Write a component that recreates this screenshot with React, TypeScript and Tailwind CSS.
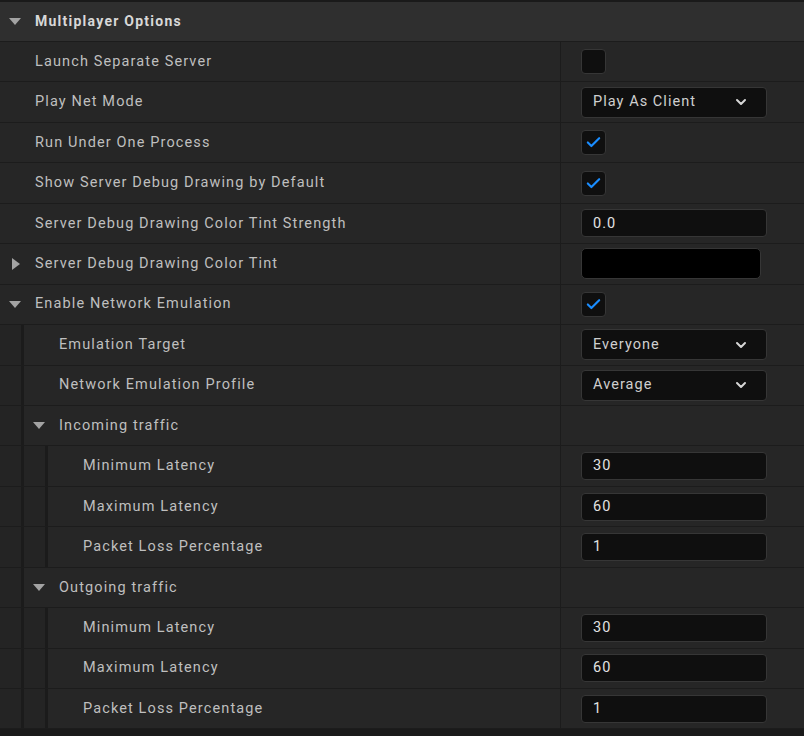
import { Check, ChevronDown } from "lucide-react";
import type { ReactNode } from "react";

type Arrow = "down" | "right" | null;

interface RowProps {
  label: string;
  level?: number;
  arrow?: Arrow;
  children?: ReactNode;
}

function Triangle({ dir }: { dir: "down" | "right" }) {
  if (dir === "down") {
    return (
      <svg width="12" height="7" viewBox="0 0 12 7">
        <path d="M0 0 L12 0 L6 7 Z" fill="#a3a3a3" />
      </svg>
    );
  }
  return (
    <svg width="8" height="12" viewBox="0 0 8 12" className="ml-[3px]">
      <path d="M0 0 L8 6 L0 12 Z" fill="#a3a3a3" />
    </svg>
  );
}

function Row({ label, level = 0, arrow = null, children }: RowProps) {
  return (
    <div className="flex h-[40.44px] border-b border-[#1c1c1c] bg-[#262626]">
      <div className="flex w-[561px] shrink-0 border-r border-[#1c1c1c]">
        {Array.from({ length: level }).map((_, i) => (
          <div
            key={i}
            className="w-[24px] shrink-0 border-r-[3px] border-[#1b1b1b] bg-[#242424]"
          />
        ))}
        <div className="flex w-[35px] shrink-0 items-center pl-[9px]">
          {arrow && <Triangle dir={arrow} />}
        </div>
        <span className="self-center text-[14.5px] tracking-[1.12px] text-[#bfbfbf]">{label}</span>
      </div>
      <div className="flex items-center pl-[20px]">{children}</div>
    </div>
  );
}

function CheckBox({ checked }: { checked?: boolean }) {
  return (
    <div className="flex h-[25px] w-[25px] items-center justify-center rounded-[4px] border border-[#363636] bg-[#0f0f0f]">
      {checked && <Check size={17} strokeWidth={3} color="#1a8dff" />}
    </div>
  );
}

function Combo({ value }: { value: string }) {
  return (
    <div className="flex h-[31px] w-[186px] items-center justify-between rounded-[4px] border border-[#363636] bg-[#0f0f0f] pl-[11px] pr-[17px]">
      <span className="text-[14.5px] tracking-[1.05px] text-[#cfcfcf]">{value}</span>
      <ChevronDown size={16} strokeWidth={3} color="#d6d6d6" />
    </div>
  );
}

function NumBox({ value }: { value: string }) {
  return (
    <div className="flex h-[28px] w-[186px] items-center rounded-[4px] border border-[#363636] bg-[#0f0f0f] pl-[11px]">
      <span className="text-[14.5px] tracking-[1.05px] text-[#e2e2e2]">{value}</span>
    </div>
  );
}

const traffic = [
  ["Minimum Latency", "30"],
  ["Maximum Latency", "60"],
  ["Packet Loss Percentage", "1"],
] as const;

export default function App() {
  return (
    <div
      className="h-[736px] w-[804px] overflow-hidden bg-[#1a1a1a] pt-[2px]"
      style={{ fontFamily: "Roboto, 'Liberation Sans', sans-serif" }}
    >
      <div className="flex h-[40px] items-center border-b border-[#1c1c1c] bg-[#2f2f2f]">
        <div className="flex w-[35px] items-center pl-[9px]">
          <Triangle dir="down" />
        </div>
        <span className="text-[14px] font-bold tracking-[1.25px] text-[#d8d8d8]">
          Multiplayer Options
        </span>
      </div>

      <Row label="Launch Separate Server">
        <CheckBox />
      </Row>
      <Row label="Play Net Mode">
        <Combo value="Play As Client" />
      </Row>
      <Row label="Run Under One Process">
        <CheckBox checked />
      </Row>
      <Row label="Show Server Debug Drawing by Default">
        <CheckBox checked />
      </Row>
      <Row label="Server Debug Drawing Color Tint Strength">
        <NumBox value="0.0" />
      </Row>
      <Row label="Server Debug Drawing Color Tint" arrow="right">
        <div className="h-[31px] w-[180px] rounded-[5px] border border-[#363636] bg-black" />
      </Row>
      <Row label="Enable Network Emulation" arrow="down">
        <CheckBox checked />
      </Row>
      <Row label="Emulation Target" level={1}>
        <Combo value="Everyone" />
      </Row>
      <Row label="Network Emulation Profile" level={1}>
        <Combo value="Average" />
      </Row>

      <Row label="Incoming traffic" level={1} arrow="down" />
      {traffic.map(([label, value]) => (
        <Row key={"in" + label} label={label} level={2}>
          <NumBox value={value} />
        </Row>
      ))}

      <Row label="Outgoing traffic" level={1} arrow="down" />
      {traffic.map(([label, value]) => (
        <Row key={"out" + label} label={label} level={2}>
          <NumBox value={value} />
        </Row>
      ))}
    </div>
  );
}
